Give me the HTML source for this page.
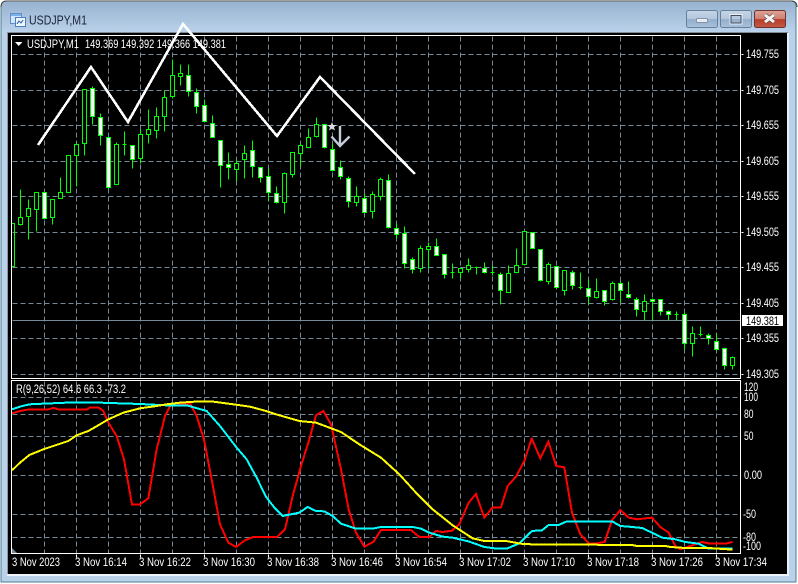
<!DOCTYPE html>
<html><head><meta charset="utf-8">
<style>
html,body{margin:0;padding:0;background:#fff;width:798px;height:584px;overflow:hidden}
svg{position:absolute;left:0;top:0;display:block}
text{font-family:"Liberation Sans",sans-serif;font-size:11.5px;fill:#fff}
.c{shape-rendering:crispEdges}
</style></head><body>
<svg width="798" height="584" viewBox="0 0 798 584" xmlns="http://www.w3.org/2000/svg">
<defs>
<linearGradient id="t" x1="0" y1="0" x2="0" y2="1"><stop offset="0" stop-color="#98b3d0"/><stop offset="1" stop-color="#bad2ea"/></linearGradient>
<linearGradient id="b1" x1="0" y1="0" x2="0" y2="1"><stop offset="0" stop-color="#c6d6e8"/><stop offset=".5" stop-color="#b2c6dc"/><stop offset=".52" stop-color="#93aecb"/><stop offset="1" stop-color="#a8c2dc"/></linearGradient>
<linearGradient id="b2" x1="0" y1="0" x2="0" y2="1"><stop offset="0" stop-color="#dfa498"/><stop offset=".5" stop-color="#cf7f70"/><stop offset=".52" stop-color="#b83c28"/><stop offset="1" stop-color="#c25a46"/></linearGradient>
</defs>
<!-- window frame -->
<path d="M1 582V7Q1 1 7 1H791Q796 1 796 7V582Z" fill="#b9d2ea" stroke="#4d7d90" stroke-width="1"/>
<path d="M1.5 7Q1.5 2 7 2H791Q795.5 2 795.5 7V32H1.5Z" fill="url(#t)"/>
<path d="M1 7Q1 1 7 1H791Q797 1 797 7" fill="none" stroke="#444" stroke-width="1"/>
<rect x="7" y="32" width="781" height="1" fill="#7e8a96"/>
<rect x="7" y="33" width="1" height="541" fill="#8a98a8"/>
<rect x="8" y="33" width="779" height="541" fill="#000"/>
<rect x="787" y="33" width="2" height="543" fill="#e8f0f8"/>
<rect x="7" y="574" width="782" height="2" fill="#eef4fa"/>
<!-- title -->
<g class="c">
<rect x="10.5" y="13.5" width="11" height="10" fill="#d4e6f7" stroke="#5c8fcb"/>
<rect x="15.5" y="17.5" width="10" height="9" fill="#eef6fd" stroke="#4a7fc0"/>
<rect x="11" y="14" width="10" height="2" fill="#7fb0e2"/>
<path d="M17 24l2-3 2 2 2-3" fill="none" stroke="#3b6fb0"/>
</g>
<text x="29" y="24.5" textLength="58" lengthAdjust="spacingAndGlyphs" style="font-size:12.5px;fill:#1b2438">USDJPY,M1</text>
<!-- buttons -->
<rect x="686.5" y="10.5" width="31" height="17" rx="2" fill="url(#b1)" stroke="#67809a"/>
<rect x="696.5" y="18.5" width="11" height="4" rx="1" fill="#e8edf3" stroke="#6d7f92" stroke-width=".7"/>
<rect x="720.5" y="10.5" width="31" height="17" rx="2" fill="url(#b1)" stroke="#67809a"/>
<rect x="731" y="15.5" width="10" height="7.5" fill="none" stroke="#3e4c5c" stroke-width="1"/>
<rect x="730" y="14.5" width="12" height="9.5" fill="none" stroke="#e8edf3" stroke-width="1"/>
<rect x="754.5" y="10.5" width="31" height="17" rx="2" fill="url(#b2)" stroke="#6e3434"/>
<path d="M765 15l9 7M774 15l-9 7" stroke="#6b5050" stroke-width="4.4"/>
<path d="M765 15l9 7M774 15l-9 7" stroke="#f4f4f4" stroke-width="3"/>

<g class="c" transform="translate(.5,.5)">
<!-- grid -->
<g fill="none" stroke="#778899" stroke-width="1" stroke-dasharray="5 3">
<path d="M12 54H740M12 90H740M12 125H740M12 161H740M12 196H740M12 232H740M12 267H740M12 303H740M12 338H740M12 374H740"/>
<path d="M12 397H740M12 414H740M12 436H740M12 475H740M12 514H740M12 537H740"/>
<path d="M44 36V378M76 36V378M108 36V378M140 36V378M172 36V378M204 36V378M236 36V378M268 36V378M300 36V378M332 36V378M364 36V378M396 36V378M428 36V378M460 36V378M492 36V378M524 36V378M556 36V378M588 36V378M620 36V378M652 36V378M684 36V378M716 36V378"/>
<path d="M44 381V553M76 381V553M108 381V553M140 381V553M172 381V553M204 381V553M236 381V553M268 381V553M300 381V553M332 381V553M364 381V553M396 381V553M428 381V553M460 381V553M492 381V553M524 381V553M556 381V553M588 381V553M620 381V553M652 381V553M684 381V553M716 381V553"/>
</g>
<path d="M12 320H740" stroke="#778899" fill="none"/>
<!-- wicks -->
<path fill="none" stroke="#00ff00" d="M20 189V225M28 199V239M36 192V231M44 192V219M52 199V224M60 177V198M76 142V186M84 89V155M92 86V124M100 113V145M108 137V188M116 142V184M124 131V155M132 145V168M140 129V163M148 109V143M156 107V138M164 90V131M172 59V98M180 64V85M188 64V96M196 88V113M204 99V122M212 115V137M220 140V187M228 152V179M236 159V181M244 145V178M252 140V177M260 167V182M268 168V201M276 186V203M284 172V213M292 152V177M300 143V166M308 128V147M316 117V137M324 124V148M332 143V171M340 160V179M348 176V207M356 186V206M364 193V213M372 191V218M380 177V200M388 174V228M396 223V238M404 226V268M412 257V273M420 245V272M428 242V268M436 238V255M444 254V278M452 263V278M460 267V278M468 258V272M476 266V274M484 262V273M492 265V275M500 272V304M508 265V292M516 248V272M524 231V264M532 232V248M540 249V281M548 262V284M556 266V288M564 270V295M572 270V289M580 272V289M588 279V304M596 278V298M604 290V305M612 281V300M620 281V302M628 281V298M636 297V316M644 294V320M652 298V320M660 299V315M668 310V320M676 311V320M684 312V349M692 326V356M700 326V336M708 333V344M716 333V350M724 348V369M732 356V369"/>
<!-- flats -->
<path fill="none" stroke="#00ff00" d="M122 144h4M450 272h4M474 267h4M490 272h4M578 287h4M674 314h4M698 334h4M11 223H14V266H11"/>
<!-- bull bodies -->
<path fill="#000" stroke="#00ff00" d="M18 217h4V224h-4zM26 208h4V216h-4zM34 192h4V209h-4zM50 199h4V217h-4zM58 192h4V198h-4zM66 155h4V192h-4zM74 144h4V155h-4zM82 89h4V143h-4zM114 144h4V184h-4zM138 134h4V158h-4zM146 129h4V134h-4zM154 116h4V130h-4zM162 97h4V116h-4zM170 75h4V96h-4zM178 73h4V76h-4zM234 163h4V169h-4zM242 153h4V159h-4zM282 173h4V202h-4zM290 152h4V174h-4zM298 145h4V153h-4zM306 137h4V147h-4zM314 124h4V136h-4zM354 196h4V202h-4zM370 194h4V211h-4zM378 179h4V196h-4zM418 248h4V268h-4zM426 246h4V249h-4zM458 268h4V272h-4zM466 265h4V269h-4zM506 273h4V292h-4zM514 265h4V272h-4zM522 231h4V264h-4zM546 264h4V281h-4zM562 270h4V290h-4zM594 291h4V297h-4zM610 283h4V299h-4zM642 301h4V311h-4zM690 333h4V343h-4zM730 357h4V365h-4z"/>
<!-- bear bodies -->
<path fill="#fff" stroke="#00ff00" d="M42 192h4V218h-4zM90 88h4V116h-4zM98 117h4V135h-4zM106 137h4V187h-4zM130 145h4V159h-4zM186 75h4V91h-4zM194 92h4V106h-4zM202 105h4V121h-4zM210 123h4V137h-4zM218 140h4V165h-4zM226 164h4V167h-4zM250 150h4V166h-4zM258 167h4V177h-4zM266 176h4V192h-4zM274 193h4V202h-4zM322 124h4V147h-4zM330 149h4V170h-4zM338 167h4V176h-4zM346 178h4V201h-4zM362 198h4V212h-4zM386 180h4V227h-4zM394 228h4V234h-4zM402 233h4V263h-4zM410 259h4V269h-4zM434 246h4V255h-4zM442 254h4V274h-4zM482 268h4V272h-4zM498 274h4V290h-4zM530 232h4V248h-4zM538 249h4V280h-4zM554 266h4V287h-4zM570 272h4V285h-4zM586 288h4V296h-4zM602 290h4V301h-4zM618 283h4V290h-4zM626 294h4V297h-4zM634 299h4V309h-4zM650 299h4V301h-4zM658 299h4V311h-4zM666 311h4V314h-4zM682 314h4V343h-4zM706 335h4V338h-4zM714 341h4V349h-4zM722 348h4V365h-4z"/>
<!-- borders -->
<path fill="none" stroke="#fff" d="M11 35H740V378H11ZM11 380H740V553H11Z"/>
<!-- ticks -->
<path fill="none" stroke="#fff" d="M741 54h2M741 90h2M741 125h2M741 161h2M741 196h2M741 232h2M741 267h2M741 303h2M741 338h2M741 374h2M76 554v3M140 554v3M204 554v3M268 554v3M332 554v3M396 554v3M460 554v3M524 554v3M588 554v3M652 554v3M716 554v3"/>
</g>
<!-- small triangles -->
<polygon points="15,42 22.5,42 18.7,46" fill="#fff"/>
<polygon points="12,548 12,553 17,553" fill="#778899"/>
<!-- texts -->
<text x="27" y="48" textLength="52" lengthAdjust="spacingAndGlyphs">USDJPY,M1</text>
<text x="85" y="48" textLength="141" lengthAdjust="spacingAndGlyphs">149.369 149.392 149.366 149.381</text>
<text x="16" y="393" textLength="110" lengthAdjust="spacingAndGlyphs">R(9,26,52) 64.6 66.3 -73.2</text>
<g>
<text x="746" y="58" textLength="33" lengthAdjust="spacingAndGlyphs">149.755</text>
<text x="746" y="94" textLength="33" lengthAdjust="spacingAndGlyphs">149.705</text>
<text x="746" y="129" textLength="33" lengthAdjust="spacingAndGlyphs">149.655</text>
<text x="746" y="165" textLength="33" lengthAdjust="spacingAndGlyphs">149.605</text>
<text x="746" y="200" textLength="33" lengthAdjust="spacingAndGlyphs">149.555</text>
<text x="746" y="236" textLength="33" lengthAdjust="spacingAndGlyphs">149.505</text>
<text x="746" y="271" textLength="33" lengthAdjust="spacingAndGlyphs">149.455</text>
<text x="746" y="307" textLength="33" lengthAdjust="spacingAndGlyphs">149.405</text>
<text x="746" y="342" textLength="33" lengthAdjust="spacingAndGlyphs">149.355</text>
<text x="746" y="378" textLength="33" lengthAdjust="spacingAndGlyphs">149.305</text>
</g>
<rect x="742" y="315" width="41" height="11" fill="#fff"/>
<text x="746" y="325" textLength="33" lengthAdjust="spacingAndGlyphs" style="fill:#000">149.381</text>
<g>
<text x="744" y="391" textLength="14" lengthAdjust="spacingAndGlyphs">120</text>
<text x="744" y="401" textLength="14" lengthAdjust="spacingAndGlyphs">100</text>
<text x="744" y="418" textLength="9.5" lengthAdjust="spacingAndGlyphs">80</text>
<text x="744" y="440" textLength="9.5" lengthAdjust="spacingAndGlyphs">50</text>
<text x="744" y="479" textLength="18" lengthAdjust="spacingAndGlyphs">0.00</text>
<text x="743" y="518" textLength="13" lengthAdjust="spacingAndGlyphs">-50</text>
<text x="743" y="541" textLength="13" lengthAdjust="spacingAndGlyphs">-80</text>
<text x="743" y="550" textLength="18" lengthAdjust="spacingAndGlyphs">-100</text>
</g>
<g>
<text x="12" y="566" textLength="48" lengthAdjust="spacingAndGlyphs">3 Nov 2023</text>
<text x="75" y="566" textLength="52" lengthAdjust="spacingAndGlyphs">3 Nov 16:14</text>
<text x="139" y="566" textLength="52" lengthAdjust="spacingAndGlyphs">3 Nov 16:22</text>
<text x="203" y="566" textLength="52" lengthAdjust="spacingAndGlyphs">3 Nov 16:30</text>
<text x="267" y="566" textLength="52" lengthAdjust="spacingAndGlyphs">3 Nov 16:38</text>
<text x="331" y="566" textLength="52" lengthAdjust="spacingAndGlyphs">3 Nov 16:46</text>
<text x="395" y="566" textLength="52" lengthAdjust="spacingAndGlyphs">3 Nov 16:54</text>
<text x="459" y="566" textLength="52" lengthAdjust="spacingAndGlyphs">3 Nov 17:02</text>
<text x="523" y="566" textLength="52" lengthAdjust="spacingAndGlyphs">3 Nov 17:10</text>
<text x="587" y="566" textLength="52" lengthAdjust="spacingAndGlyphs">3 Nov 17:18</text>
<text x="651" y="566" textLength="52" lengthAdjust="spacingAndGlyphs">3 Nov 17:26</text>
<text x="715" y="566" textLength="52" lengthAdjust="spacingAndGlyphs">3 Nov 17:34</text>
</g>
<!-- indicator lines -->
<g class="c" fill="none" stroke-width="6" stroke-linejoin="miter">
<g transform="translate(0,389.33) scale(.3333)">
<polyline stroke="#ff0000" points="36,72 60,65 88,60 145,60 160,56 175,60 262,60 270,54 295,54 310,65 325,100 350,140 372,210 396,345 420,345 445,327 470,180 495,80 515,42 570,42 590,80 612,150 635,270 660,405 685,460 708,473 735,453 760,443 800,443"/>
<polyline stroke="#00ffff" points="36,60 60,52 88,45 130,43 200,40 300,40 420,44 500,48 560,48 620,65 660,110 710,175 740,210 770,265 798,322"/>
</g>
<g transform="translate(266,389.33) scale(.3333)">
<polyline stroke="#ff0000" points="0,443 33,443 57,420 80,320 105,230 130,150 150,78 172,65 195,105 225,240 248,360 270,430 295,472 322,458 345,422 435,422 460,443 490,443 510,425 530,428 558,424 580,405 608,340 630,314 655,385 680,354 705,354 725,290 750,262 775,215 798,145"/>
<polyline stroke="#00ffff" points="0,322 25,355 50,380 75,375 100,370 125,353 150,365 175,366 200,380 225,403 270,418 320,418 345,413 440,413 465,418 490,430 530,442 560,445 610,457 655,473 685,477 725,477 760,462 798,425"/>
</g>
<g transform="translate(532,389.33) scale(.3333)">
<polyline stroke="#ff0000" points="-2,145 25,207 49,157 73,230 97,234 120,370 145,435 170,462 195,462 218,458 240,393 265,362 290,385 315,390 360,385 385,413 410,430 430,470 445,480 470,472 490,465 510,458 530,462 585,462 602,458"/>
<polyline stroke="#00ffff" points="-2,425 30,423 50,407 80,407 105,396 240,396 265,410 290,412 330,416 360,430 390,445 430,450 460,458 500,463 530,478 602,478"/>
</g>
<g transform="translate(0,389.33) scale(.3333)">
<polyline stroke="#ffff00" points="36,243 60,220 88,197 130,180 175,165 205,155 230,138 265,125 300,105 325,90 370,70 420,57 470,50 500,45 540,40 600,36 640,37 700,45 750,52 798,65"/>
</g>
<g transform="translate(266,389.33) scale(.3333)">
<polyline stroke="#ffff00" points="0,65 30,75 100,95 150,100 225,128 280,165 345,205 400,255 450,310 500,360 560,408 620,447 655,455 720,455 770,464 798,465"/>
</g>
<g transform="translate(532,389.33) scale(.3333)">
<polyline stroke="#ffff00" points="-2,465 300,467 315,470 400,470 415,473 460,476 530,476 602,481"/>
</g>
</g>
<!-- trend line -->
<polyline class="c" points="38,145 91,67 128,122 183,24 277,136 320,77 415,174" fill="none" stroke="#fff" stroke-width="2.6" stroke-linejoin="miter"/>
<!-- sell object -->
<polygon points="332,122 333.2,125 336.5,125 334,127.2 335,130.5 332,128.6 329,130.5 330,127.2 327.5,125 330.8,125" fill="#d8d8e0"/>
<path d="M340 126V146M331.5 136.5L340 146L349.5 136.5" fill="none" stroke="#c4ccdc" stroke-width="2.4"/>
</svg>
</body></html>
